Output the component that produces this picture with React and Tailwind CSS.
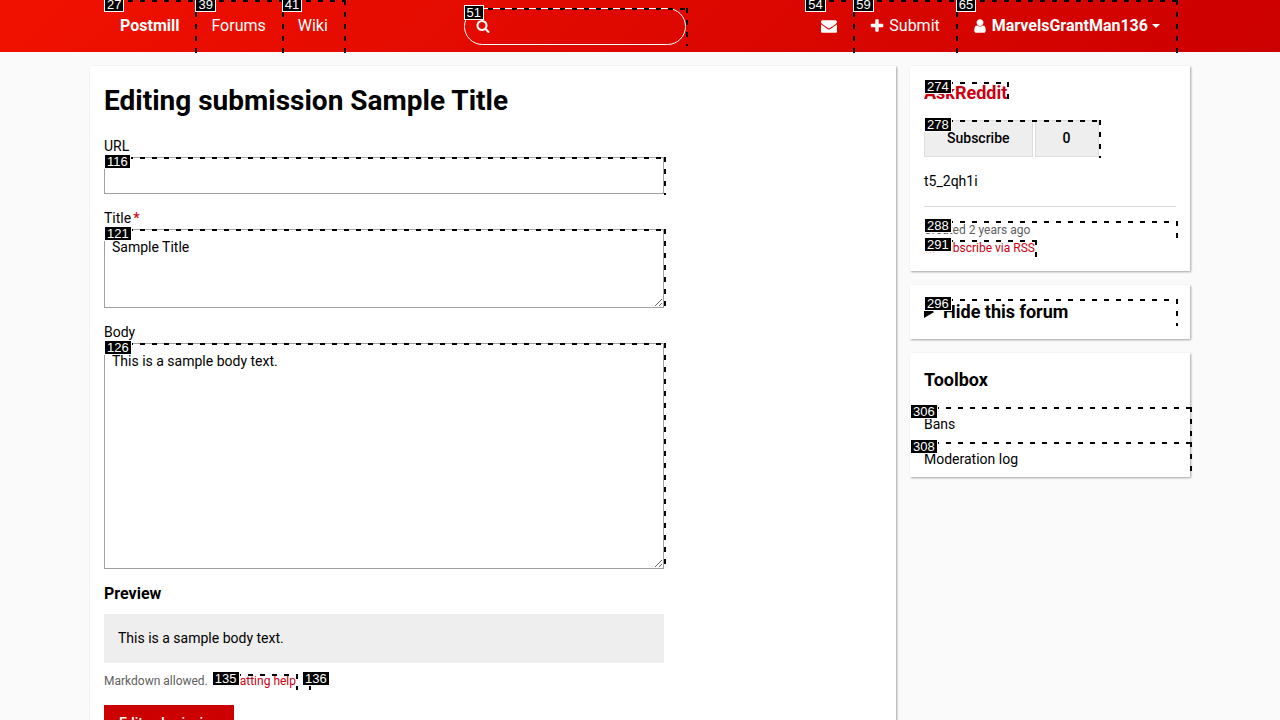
import React from "react";

const ICONS = {
  search:
    "M1216 832q0-185-131.5-316.5t-316.5-131.5-316.5 131.5-131.5 316.5 131.5 316.5 316.5 131.5 316.5-131.5 131.5-316.5zm512 832q0 52-38 90t-90 38q-54 0-90-38l-343-342q-179 124-399 124-143 0-273.5-55.5t-225-150-150-225-55.5-273.5 55.5-273.5 150-225 225-150 273.5-55.5 273.5 55.5 225 150 150 225 55.5 273.5q0 220-124 399l343 343q37 37 37 90z",
  user: "M1536 1399q0 109-62.5 187t-150.5 78h-854q-88 0-150.5-78t-62.5-187q0-85 8.5-160.5t31.5-152 58.5-131 94-89 134.5-34.5q131 128 313 128t313-128q76 0 134.5 34.5t94 89 58.5 131 31.5 152 8.5 160.5zm-256-887q0 159-112.5 271.5t-271.5 112.5-271.5-112.5-112.5-271.5 112.5-271.5 271.5-112.5 271.5 112.5 112.5 271.5z",
  plus: "M1600 736v192q0 40-28 68t-68 28h-416v416q0 40-28 68t-68 28h-192q-40 0-68-28t-28-68v-416h-416q-40 0-68-28t-28-68v-192q0-40 28-68t68-28h416v-416q0-40 28-68t68-28h192q40 0 68 28t28 68v416h416q40 0 68 28t28 68z",
  rss: "M576 1344q0 80-56 136t-136 56-136-56-56-136 56-136 136-56 136 56 56 136zm512 123q2 28-17 48-18 21-47 21h-135q-25 0-43-16.5t-20-41.5q-22-229-184.5-391.5t-391.5-184.5q-25-2-41.5-20t-16.5-43v-135q0-29 21-47 17-17 43-17h5q160 13 306 80.5t259 181.5q114 113 181.5 259t80.5 306zm512 2q2 27-18 47-18 20-46 20h-143q-26 0-44.5-17.5t-19.5-42.5q-12-215-101-408.5t-231.5-336-336-231.5-408.5-102q-25-1-42.5-19.5t-17.5-43.5v-143q0-28 20-46 18-18 44-18h3q262 13 501.5 120t425.5 294q187 186 294 425.5t120 501.5z",
  envelope:
    "M1792 710v794q0 66-47 113t-113 47h-1472q-66 0-113-47t-47-113v-794q44 49 101 87 362 246 497 345 57 42 92.5 65.5t94.5 48 110 24.5h2q51 0 110-24.5t94.5-48 92.5-65.5q170-123 498-345 57-39 100-87zm0-294q0 79-49 151t-122 123q-376 261-468 325-10 7-42.5 31t-54 38.5-52 32.5-57.5 27-50 9h-2q-23 0-50-9t-57.5-27-52-32.5-54-38.5-42.5-31q-91-64-262-182.5t-205-142.5q-62-42-117-115.5t-55-136.5q0-78 41.5-130t118.5-52h1472q65 0 112.5 47t47.5 113z",
};

function Icon({ name, className = "size-4" }) {
  return (
    <svg viewBox="0 0 1792 1792" fill="currentColor" aria-hidden="true" className={className}>
      <path d={ICONS[name]} />
    </svg>
  );
}

// Numbered, dashed outline laid over an interactive element.
function Mark({ id }) {
  return (
    <span aria-hidden="true" className="pointer-events-none contents">
      <span className="absolute inset-x-0 top-0 z-10 h-0.5 bg-[repeating-linear-gradient(90deg,#000_0_5px,transparent_5px_12px)]" />
      <span className="absolute -right-0.5 top-0 -bottom-px z-10 w-0.5 bg-[repeating-linear-gradient(180deg,#000_0_5px,transparent_5px_12px)]" />
      <span className="absolute -top-[3px] left-0 z-20 border border-white bg-black px-0.5 font-['Liberation_Sans',sans-serif] text-[13px] leading-[13px] font-normal text-white">
        {id}
      </span>
    </span>
  );
}

function NavLink({ id, label, className = "", children }) {
  return (
    <a
      href="#"
      aria-label={label}
      className={`relative flex h-[52px] items-center gap-1 px-4 text-base text-white ${className}`}
    >
      {children}
      <Mark id={id} />
    </a>
  );
}

function Panel({ as: Tag = "section", className = "", children }) {
  return <Tag className={`bg-white shadow-[1px_1px_2px_rgba(0,0,0,0.35)] ${className}`}>{children}</Tag>;
}

const fieldStyle =
  "block w-full border border-[#a0a0a0] bg-white p-[7px] text-sm leading-[21px] text-black outline-none";

function Field({ id, name, label, required, children }) {
  return (
    <div>
      <label htmlFor={name} className="block">
        {label}
        {required && <span className="ml-0.5 font-bold text-[#d01020]">*</span>}
      </label>
      <div className="relative">
        {children}
        <Mark id={id} />
      </div>
    </div>
  );
}

function Header() {
  return (
    <header className="bg-[linear-gradient(135deg,#f11100,#cc0000)]">
      <nav className="mx-auto flex max-w-[1100px] items-center justify-between px-3.5">
        <div className="flex">
          <NavLink id="27" className="font-bold">Postmill</NavLink>
          <NavLink id="39">Forums</NavLink>
          <NavLink id="41">Wiki</NavLink>
        </div>
        <form role="search" className="relative w-[222px]">
          <input
            type="search"
            aria-label="Search"
            className="block h-[37px] w-full rounded-full border border-white bg-transparent pr-3 pl-8 text-sm text-white outline-none"
          />
          <span className="pointer-events-none absolute inset-y-0 left-3 flex items-center text-white">
            <Icon name="search" className="size-3.5" />
          </span>
          <Mark id="51" />
        </form>
        <div className="flex">
          <NavLink id="54" label="Messages">
            <Icon name="envelope" />
          </NavLink>
          <NavLink id="59">
            <Icon name="plus" />
            Submit
          </NavLink>
          <button type="button" className="relative flex h-[52px] items-center gap-1 px-4 text-base font-bold text-white">
            <Icon name="user" />
            MarvelsGrantMan136
            <svg viewBox="0 0 8 4" fill="currentColor" aria-hidden="true" className="h-1 w-2">
              <path d="M0 0h8L4 4z" />
            </svg>
            <Mark id="65" />
          </button>
        </div>
      </nav>
    </header>
  );
}

function EditForm() {
  return (
    <form className="max-w-[560px]">
      <div className="flex flex-col gap-3.5">
        <Field id="116" name="url" label="URL">
          <input id="url" type="url" className={fieldStyle} />
        </Field>
        <Field id="121" name="title" label="Title" required>
          <textarea id="title" rows={3} defaultValue="Sample Title" className={fieldStyle} />
        </Field>
        <Field id="126" name="body" label="Body">
          <textarea id="body" rows={10} defaultValue="This is a sample body text." className={fieldStyle} />
        </Field>
      </div>
      <h2 className="mt-3.5 mb-2.5 text-base leading-[21px] font-bold">Preview</h2>
      <div className="bg-[#eeeeee] p-3.5">
        <p>This is a sample body text.</p>
      </div>
      <p className="mt-2 mb-[13px] flex items-center text-xs leading-[21px] text-[#606060]">
        <span className="mr-1">Markdown allowed.</span>
        <a href="#" className="relative mr-1.5 leading-[15px] text-[#cc0011]">
          Formatting help
          <Mark id="135" />
        </a>
        <span className="relative h-[15px] w-[7px]">
          <Mark id="136" />
        </span>
      </p>
      <button type="submit" className="border border-[#cc0000] bg-[#cc0000] px-3.5 py-[7px] font-medium text-white">
        Edit submission
      </button>
    </form>
  );
}

function Sidebar() {
  return (
    <aside className="flex w-[280px] shrink-0 flex-col gap-3.5">
      <Panel className="p-3.5">
        <h2 className="mb-3.5 text-lg leading-[26px] font-bold">
          <a href="#" className="relative text-[#cc0011]">
            AskReddit
            <Mark id="274" />
          </a>
        </h2>
        <button type="button" className="relative flex gap-0.5 font-medium">
          <span className="border border-[#dddddd] bg-[#eeeeee] px-[22px] py-[7px]">Subscribe</span>
          <span className="border border-[#dddddd] bg-[#eeeeee] px-[27px] py-[7px]">0</span>
          <Mark id="278" />
        </button>
        <p className="my-3.5">t5_2qh1i</p>
        <hr className="mb-3.5 border-[#d8d8d8]" />
        <div className="text-xs leading-[18px] text-[#606060]">
          <p className="relative">
            Created 2 years ago
            <Mark id="288" />
          </p>
          <p className="flex py-px">
            <a href="#" className="relative flex items-center gap-[3px] leading-4 text-[#cc0011]">
              <Icon name="rss" className="size-3" />
              Subscribe via RSS
              <Mark id="291" />
            </a>
          </p>
        </div>
      </Panel>
      <Panel className="p-3.5">
        <details>
          <summary className="relative text-lg leading-[26px] font-bold">
            Hide this forum
            <Mark id="296" />
          </summary>
        </details>
      </Panel>
      <Panel className="pt-3.5">
        <h2 className="mb-3.5 px-3.5 text-lg leading-[26px] font-bold">Toolbox</h2>
        <ul>
          <li>
            <a href="#" className="relative block px-3.5 py-[7px]">
              Bans
              <Mark id="306" />
            </a>
          </li>
          <li>
            <a href="#" className="relative block px-3.5 py-[7px]">
              Moderation log
              <Mark id="308" />
            </a>
          </li>
        </ul>
      </Panel>
    </aside>
  );
}

export default function App() {
  return (
    <div className="min-h-screen bg-[#fafafa] font-['Roboto',sans-serif] text-sm leading-[21px] text-black">
      <Header />
      <div className="mx-auto flex max-w-[1100px] items-start gap-3.5 py-3.5">
        <Panel as="main" className="min-w-0 flex-1 p-3.5">
          <h1 className="mb-3.5 text-[28px] leading-[42px] font-bold">Editing submission Sample Title</h1>
          <EditForm />
        </Panel>
        <Sidebar />
      </div>
    </div>
  );
}
